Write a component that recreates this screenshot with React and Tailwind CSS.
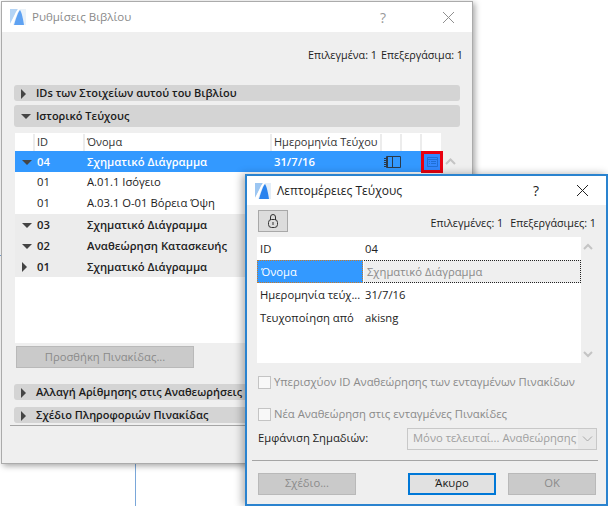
import React from 'react';

const font = { fontFamily: '"Open Sans", "Noto Sans", sans-serif' };

const Logo = ({ faded }) => (
  <svg width="16" height="16" viewBox="0 0 16 16" className={faded ? 'opacity-75' : ''}>
    <rect width="16" height="16" fill="#e4eef8" />
    <path d="M0 0 H8 C5 4 3 10 0 15 Z" fill="#9cc6f2" />
    <path d="M0 15 C3 10 5 4 8 0 H10 C7 4 5 10 3 16 H0 Z" fill="#ffffff" />
    <path d="M4 16 C6 9 8 3 10 1 C12 4 13 10 14 16 Z" fill="#2a83ee" />
  </svg>
);

const Closed = () => <span className="w-0 h-0 border-y-[5px] border-y-transparent border-l-[5px] border-l-[#444]" />;
const Open = ({ color = 'border-t-[#444]' }) => <span className={`w-0 h-0 border-x-[5px] border-x-transparent border-t-[5px] ${color}`} />;

const Section = ({ title, open, h = 'h-4 pt-px' }) => (
  <div className={`${h} mx-[12px] flex items-center bg-[#d4d4d4] rounded-[3px] text-[11px] font-semibold text-[#1a1a1a]`}>
    <span className="w-[22px] pl-[7px] flex items-center">{open ? <Open /> : <Closed />}</span>
    <span className="whitespace-nowrap">{title}</span>
  </div>
);

const Row = ({ arrow, id, name, date, bold, gray, blue, children }) => (
  <div className={`flex items-center h-[21px] text-[11.25px] ${bold ? 'font-semibold pt-px' : ''} ${gray ? 'bg-[#ececec]' : ''} ${blue ? 'bg-[#3399ff] text-white' : 'text-[#222]'}`}>
    <span className="w-[22px] pl-[7px] flex items-center">{arrow}</span>
    <span className="w-[50px]">{id}</span>
    <span className="w-[187px] whitespace-nowrap">{name}</span>
    <span className="whitespace-nowrap">{date}</span>
    {children}
  </div>
);

const Prop = ({ label, value }) => (
  <div className="flex items-center h-[23px] pt-px text-[11.25px] text-[#222]">
    <span className="w-[108px] pl-[3px] whitespace-nowrap">{label}</span>
    <span>{value}</span>
  </div>
);

const Check = ({ label }) => (
  <div className="flex items-center gap-[3px] ml-[11px] text-[11.25px] text-[#8a8a8a]">
    <span className="w-[13px] h-[13px] bg-[#f8f8f8] border border-[#c4c4c4]" />
    <span className="whitespace-nowrap">{label}</span>
  </div>
);

const Btn = ({ children, w = 'w-[98px]', active }) => (
  <div className={`${w} h-[22px] flex items-center justify-center text-[11.25px] ${active ? 'bg-[#e1e1e1] border-2 border-[#0078d7] text-[#1a1a1a]' : 'bg-[#cacaca] border border-[#b9b9b9] text-[#8b8b8b]'}`}>
    {children}
  </div>
);

const X = ({ color }) => (
  <svg width="13" height="13" viewBox="0 0 13 13" stroke={color} strokeWidth="1" fill="none">
    <path d="M1 1 L12 12 M12 1 L1 12" />
  </svg>
);

function BackWindow() {
  return (
    <div className="absolute left-[1px] top-[1px] w-[472px] h-[463px] bg-[#efefef] border border-[#ababab] shadow-[2px_2px_6px_rgba(0,0,0,0.35)] flex flex-col">
      <div className="h-[30px] bg-white flex items-center pl-[8px] text-[#8a8a8a] text-[11.5px]">
        <Logo faded />
        <span className="ml-[6px]">Ρυθμίσεις Βιβλίου</span>
        <span className="ml-auto text-[14px] text-[#999] mr-[56px]">?</span>
        <span className="mr-[17px]"><X color="#8f8f8f" /></span>
      </div>
      <div className="h-[53px] flex justify-end pr-[9px] pt-[15px] text-[10.75px] text-[#222] gap-[4px]">
        <span>Επιλεγμένα: 1</span>
        <span>Επεξεργάσιμα: 1</span>
      </div>
      <Section title="IDs των Στοιχείων αυτού του Βιβλίου" />
      <div className="h-1" />
      <Section title="Ιστορικό Τεύχους" open h="h-[22px]" />
      <div className="relative mt-[6px] ml-[13px] w-[426px] h-[210px] bg-white">
        <div className="flex h-[18px] items-center pt-px text-[11px] text-[#333]">
          <span className="w-[20px] h-full border-r-2 border-[#ececec]" />
          <span className="w-[50px] h-full flex items-center border-r-2 border-[#ececec] pl-[2px]">ID</span>
          <span className="w-[187px] h-full flex items-center border-r-2 border-[#ececec] pl-[2px]">Όνομα</span>
          <span className="w-[110px] h-full flex items-center border-r-2 border-[#ececec] pl-[2px] whitespace-nowrap">Ημερομηνία Τεύχου</span>
          <span className="w-[20px] h-full border-r-2 border-[#ececec]" />
          <span className="w-[20px] h-full border-r-2 border-[#ececec]" />
          <span className="w-[19px] h-full" />
        </div>
        <Row arrow={<Open />} id="04" name="Σχηματικό Διάγραμμα" date="31/7/16" bold blue>
          <svg className="absolute left-[369px] top-[23px]" width="17" height="12" viewBox="0 0 17 12" fill="none" stroke="#2b3a4a" strokeWidth="1">
            <path d="M2.5 .5 H16.5 V11.5 H2.5 Z M3.5 .5 V11.5 M8.5 .5 V11.5 M0 2.5 H3 M0 4.5 H3 M0 6.5 H3 M0 8.5 H3 M0 10.5 H3" />
          </svg>
        </Row>
        <Row id="01" name="Α.01.1 Ισόγειο" />
        <Row id="01" name="Α.03.1 Ο-01 Βόρεια Όψη" />
        <Row arrow={<Open />} id="03" name="Σχηματικό Διάγραμμα" bold gray />
        <Row arrow={<Open />} id="02" name="Αναθεώρηση Κατασκευής" bold gray />
        <Row arrow={<Closed />} id="01" name="Σχηματικό Διάγραμμα" bold gray />
        {/* red marker on the details button */}
        <div className="absolute left-[406px] top-[18px] w-[22px] h-[22px] border-[3px] border-[#e8000f] bg-[#3388ff] flex items-center justify-center">
          <svg width="11" height="10" viewBox="0 0 11 10" fill="none" stroke="#1f6fd6" strokeWidth="1">
            <path d="M.5 .5 H10.5 V9.5 H.5 Z M.5 2.5 H10.5 M2 4.5 H3 M2 6.5 H3 M4 4.5 H9 M4 6.5 H9" />
          </svg>
        </div>
      </div>
      <svg className="absolute left-[443px] top-[156px]" width="11" height="7" viewBox="0 0 11 7" fill="none" stroke="#c4c4c4" strokeWidth="2">
        <path d="M1 6 L5.5 1.5 L10 6" />
      </svg>
      <div className="mt-[3px] ml-[14px] w-[178px] h-[22px] flex items-center justify-center bg-[#cacaca] border border-[#b9b9b9] text-[11.25px] text-[#8b8b8b]">
        Προσθήκη Πινακίδας...
      </div>
      <div className="h-4" />
      <Section title="Αλλαγή Αρίθμησης στις Αναθεωρήσεις" />
      <div className="h-[7px]" />
      <Section title="Σχέδιο Πληροφοριών Πινακίδας" />
      <div className="mt-[2px] mx-[8px] border-t border-[#a5a5a5]" />
    </div>
  );
}

function FrontWindow() {
  return (
    <div className="absolute left-[245px] top-[174px] w-[363px] h-[332px] bg-[#efefef] border-2 border-[#2a83cf] shadow-[-3px_0_8px_rgba(0,0,0,0.3)] flex flex-col">
      <div className="h-[29px] bg-white flex items-center pl-[8px] text-[12px] text-[#222] shrink-0">
        <Logo />
        <span className="ml-[6px]">Λεπτομέρειες Τεύχους</span>
        <span className="ml-auto text-[14px] text-[#222] mr-[37px]">?</span>
        <span className="mr-[17px]"><X color="#222" /></span>
      </div>
      <div className="flex items-center h-[22px] mt-[5px] shrink-0 pl-[11px] pr-[10px]">
        <div className="w-[30px] h-[22px] flex items-center justify-center bg-[#dcdcdc] border border-[#a8a8a8]">
          <svg width="10" height="14" viewBox="0 0 10 14" fill="none" stroke="#333" strokeWidth="1">
            <path d="M2.5 6 V3 a2.5 2.5 0 0 1 5 0 V6" />
            <rect x=".5" y="5.5" width="9" height="8" rx="3" />
            <path d="M5 8 V11" />
          </svg>
        </div>
        <div className="ml-auto mt-[4px] flex gap-[7px] text-[10.75px] text-[#222] whitespace-nowrap">
          <span>Επιλεγμένες: 1</span>
          <span>Επεξεργάσιμες: 1</span>
        </div>
      </div>
      <div className="relative mt-[5px] ml-[10px] w-[324px] h-[126px] bg-white shrink-0">
        <Prop label="ID" value="04" />
        <div className="flex h-[23px] text-[11.25px]">
          <span className="w-[106px] pl-[3px] pt-px flex items-center bg-[#3399ff] text-white border border-dotted border-[#c77a2a]">Όνομα</span>
          <span className="flex-1 pl-[3px] pt-px ml-px flex items-center bg-[#efefef] text-[#8a8a8a] border border-dotted border-[#222] border-l-0">Σχηματικό Διάγραμμα</span>
        </div>
        <Prop label="Ημερομηνία τεύχ..." value="31/7/16" />
        <Prop label="Τευχοποίηση από" value="akisng" />
      </div>
      <svg className="absolute left-[336px] top-[67px]" width="10" height="7" viewBox="0 0 10 7" fill="none" stroke="#c4c4c4" strokeWidth="2">
        <path d="M1 6 L5 2 L9 6" />
      </svg>
      <svg className="absolute left-[336px] top-[175px]" width="10" height="7" viewBox="0 0 10 7" fill="none" stroke="#c4c4c4" strokeWidth="2">
        <path d="M1 1 L5 5 L9 1" />
      </svg>
      <div className="mt-[11px]"><Check label="Υπερισχύον ID Αναθεώρησης των ενταγμένων Πινακίδων" /></div>
      <div className="mt-[15px]"><Check label="Νέα Αναθεώρηση στις ενταγμένες Πινακίδες" /></div>
      <div className="flex items-center mt-[5px] ml-[11px] mr-[9px] h-[22px] text-[11.25px] text-[#222]">
        <span className="w-[149px] shrink-0 whitespace-nowrap">Εμφάνιση Σημαδιών:</span>
        <div className="flex-1 min-w-0 h-[22px] flex items-center border border-[#c8c8c8] bg-[#e8e8e8] text-[#a0a0a0]">
          <span className="flex-1 min-w-0 h-full bg-[#efefef] pl-[5px] flex items-center whitespace-nowrap">Μόνο τελευταί... Αναθεώρησης</span>
          <span className="w-[18px] shrink-0 flex justify-center">
            <svg width="11" height="6" viewBox="0 0 11 6" fill="none" stroke="#a8a8a8">
              <path d="M1 .5 L5.5 5 L10 .5" />
            </svg>
          </span>
        </div>
      </div>
      <div className="mt-[10px] ml-[5px] mr-[8px] border-t border-[#a5a5a5]" />
      <div className="flex mt-[12px] ml-[11px] mr-[9px]">
        <Btn>Σχέδιο...</Btn>
        <div className="ml-[52px]"><Btn w="w-[88px]" active>Άκυρο</Btn></div>
        <div className="ml-[12px]"><Btn w="w-[88px]">OK</Btn></div>
      </div>
    </div>
  );
}

export default function App() {
  return (
    <div className="relative w-[608px] h-[506px] bg-white overflow-hidden" style={font}>
      {/* drawing lines behind the windows */}
      <div className="absolute left-[135px] top-[460px] w-px h-[46px] bg-[#7aa7d9]" />
      <div className="absolute left-0 top-[255px] w-px h-px bg-[#7aa7d9]" />
      <BackWindow />
      <FrontWindow />
    </div>
  );
}
